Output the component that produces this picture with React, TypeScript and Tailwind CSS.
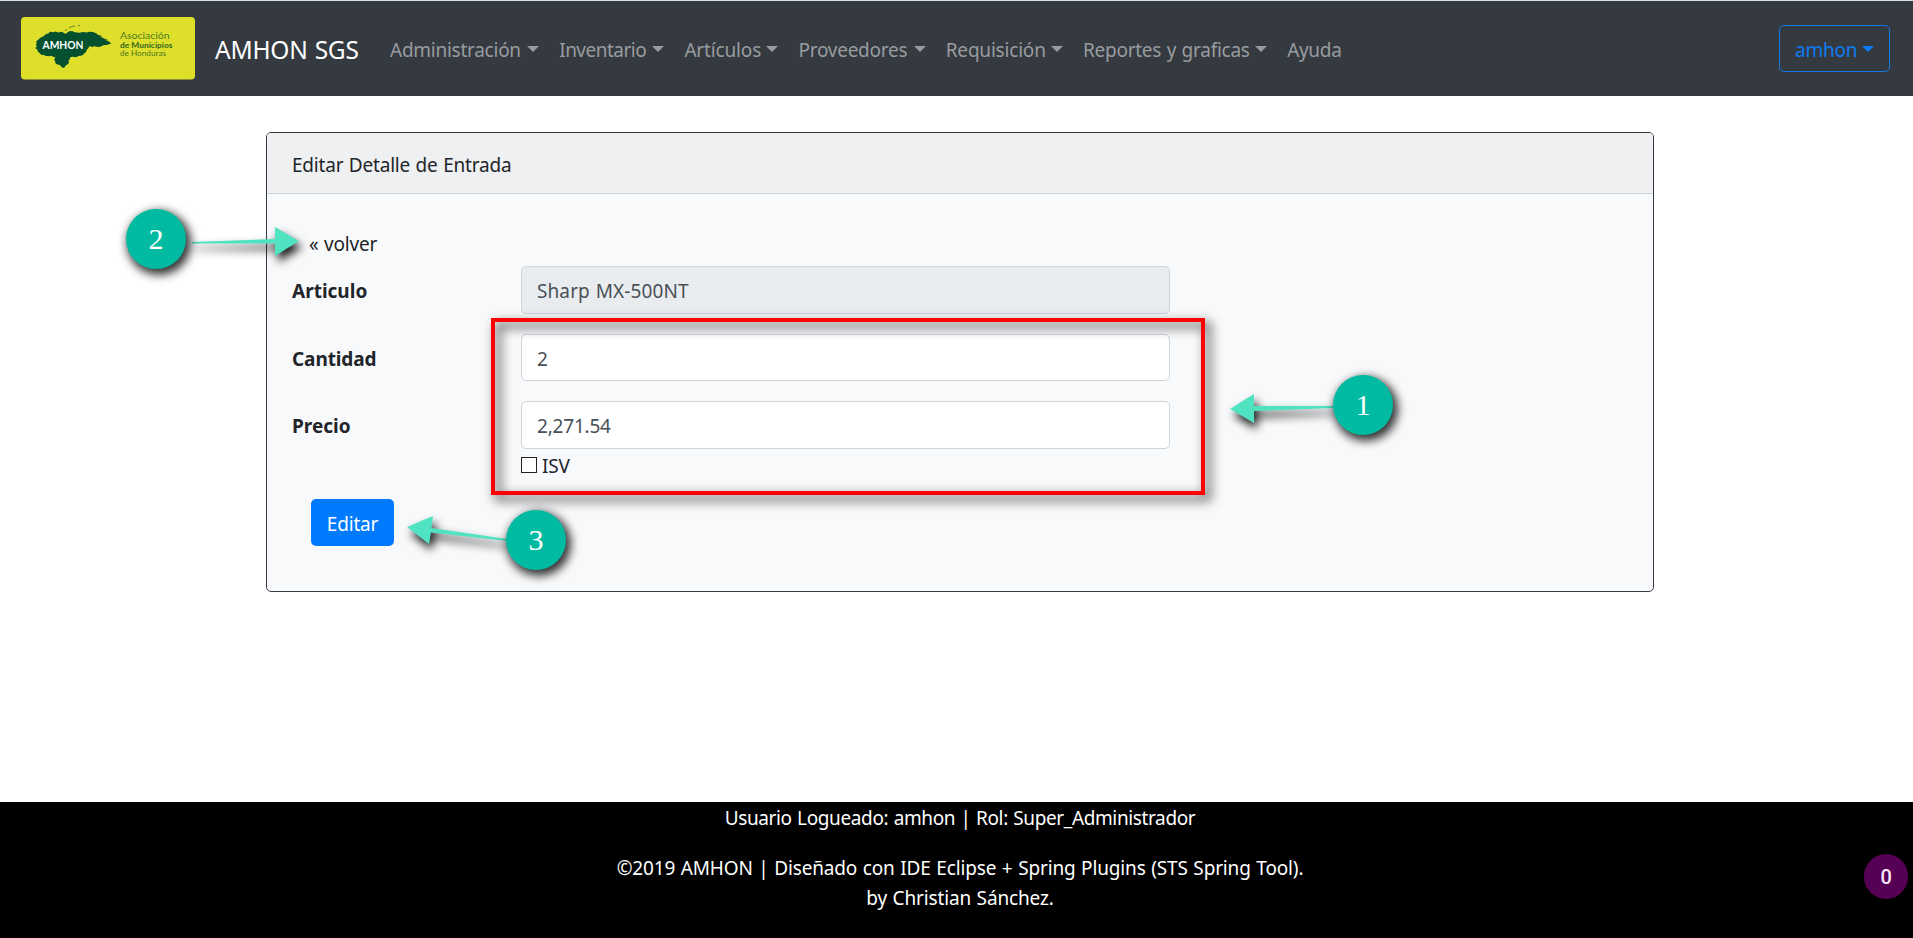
import React from "react";

function Caret({ className = "" }: { className?: string }) {
  return (
    <svg viewBox="0 0 12 6" className={`block h-[6px] w-[12px] shrink-0 ${className}`} fill="currentColor">
      <path d="M0 0h12L6 6z" />
    </svg>
  );
}

const menu = [
  { label: "Administración", width: "w-[131px]", tracking: "tracking-[-0.26px]", caret: true },
  { label: "Inventario", width: "w-[87px]", tracking: "tracking-[-0.5px]", caret: true },
  { label: "Artículos", width: "w-[76px]", tracking: "tracking-[-0.15px]", caret: true },
  { label: "Proveedores", width: "w-[109px]", tracking: "tracking-[-0.27px]", caret: true },
  { label: "Requisición", width: "w-[99px]", tracking: "tracking-[-0.2px]", caret: true },
  { label: "Reportes y graficas", width: "w-[166px]", tracking: "tracking-[-0.25px]", caret: true },
  { label: "Ayuda", width: "w-[54px]", tracking: "tracking-[-0.3px]", caret: false },
];

function Logo() {
  return (
    <svg viewBox="0 0 174 63" className="block h-[63px] w-[174px] shrink-0">
      <rect width="174" height="62.5" rx="4" fill="#dddf2b" />
      <path
        fill="#04502f"
        transform="translate(-0.6 0)"
        d="M14.7 31l1.800-1.500-1-1.500.8-1.700-.6-1.600 2-2 3-2.400 2-.9 3-2.400 2.200-.6 1.800-1.700 3.300.6 2-.8 2.700 1 4-.7 2 1.400 2 .5 2.300-2.200 3.700-.5 2.600 1.300 4.700.4 3.600-.7 4 .4 2.400-.7 3.300.2 3.400 1.400 2.500 2 1.500-.2 3.300 2.900 3.700 1.300.5 1.500 3.800 2.500-3.700 1.400-4.300.6-3 1.400-2.700.3-3.500-.7-2.100.7-2.700-1-1 2.200-1.700 1.500-.6 2.200-1.700 1.400-1.300 1.500-2 .9-2.600.2-2.400 1.400-3.300-.5-2.700.5-.3 2-1.400 1.400.6 1.800-.9 1.500-2.700 1.700-.7 1.500-2 .8-1.500-1.600-1.800-1.700-2.200-.2-1.800-1.500-.3-1.700-1-1.600 1.300-2.400-1.800-.4-2.500-1.200-2.300.6-2.700-.3-2.300-1-2.700-.3-1.600-1.700-1.800-1.700-.4-1.700z"
      />
      <path d="M44 13.500l2-1M48 11l3-1.500 3-.3M57 9l2-.8" stroke="#3c6a2c" strokeWidth=".8" fill="none" />
      <path d="M79 19.500l4 1.500 4 3" stroke="#dddf2b" strokeWidth=".6" fill="none" />
      <text x="21.500" y="31.800" textLength="41" lengthAdjust="spacingAndGlyphs" fill="#fff" fontSize="11.500" fontWeight="700" fontFamily="Lato, sans-serif" letterSpacing="0">AMHON</text>
      <g fill="#4f7a22" fontFamily="Lato, sans-serif" letterSpacing="0" wordSpacing="0">
        <text x="99" y="22.300" textLength="49.500" lengthAdjust="spacingAndGlyphs" fontSize="9.500">Asociación</text>
        <text x="99" y="30.700" textLength="52.500" lengthAdjust="spacingAndGlyphs" fontSize="8.300" fontWeight="700" fill="#30661f">de Municipios</text>
        <text x="99" y="39.200" textLength="46" lengthAdjust="spacingAndGlyphs" fontSize="8.300">de Honduras</text>
      </g>
    </svg>
  );
}

function Step({ n, className }: { n: number; className: string }) {
  return (
    <div
      className={`absolute flex h-[60px] w-[60px] items-center justify-center rounded-full bg-[#00bba2] font-['Liberation_Serif',serif] text-[30px] leading-none text-white shadow-[3px_4px_10px_2px_rgba(0,0,0,0.8)] ${className}`}
    >
      {n}
    </div>
  );
}

function Arrow({ points, className }: { points: string; className: string }) {
  return (
    <svg viewBox="0 0 110 30" className={`absolute h-[30px] w-[110px] overflow-visible drop-shadow-[3px_6px_5px_rgba(0,0,0,0.9)] ${className}`}>
      <polygon points={points} fill="#4fe3c1" />
    </svg>
  );
}

const field = "flex w-[649px] items-center rounded-[5px] border border-[#ced4da] pt-[2px] pl-[15px] text-[#495057]";

export default function App() {
  return (
    <div className="relative flex h-[938px] w-[1913px] flex-col overflow-hidden bg-white font-['Noto_Sans',sans-serif] text-[19px] leading-[30px] tracking-[-0.2px] [word-spacing:0.8px] text-[#212529]">
      <nav className="flex h-[96px] shrink-0 items-center border-t border-[#d8e3e3] bg-[#343a40] pr-[23px] pl-[21px]">
        <Logo />
        <a className="mt-[2px] ml-[20px] w-[144px] text-[24.5px] tracking-[-0.25px] [word-spacing:1px] whitespace-nowrap text-white">AMHON SGS</a>
        <ul className="ml-[31px] flex gap-[20.2px] text-[#999c9f]">
          {menu.map((m) => (
            <li key={m.label} className="flex items-center gap-[6px]">
              <span className={`mt-[2px] whitespace-nowrap ${m.width} ${m.tracking}`}>{m.label}</span>
              {m.caret && <Caret />}
            </li>
          ))}
        </ul>
        <button className="ml-auto flex h-[47px] w-[111px] items-center gap-[6px] rounded-[5px] border border-[#1678e0] pl-[15px] text-[#0d7bf5]">
          <span className="mt-[2px] w-[61px] text-left">amhon</span>
          <Caret />
        </button>
      </nav>

      <main className="flex-1 pt-[36px] pl-[266px]">
        <section className="h-[460px] w-[1388px] rounded-[5px] border border-[#343a40] bg-[#f8f9fb]">
          <header className="flex h-[61px] items-center rounded-t-[4px] border-b border-[#d0d3d6] bg-[#eff0f2] pl-[25px]">
            <span className="mt-[3px]">Editar Detalle de Entrada</span>
          </header>
          <div className="pt-[35px] pl-[25px]">
            <a className="ml-[17px] block h-[37px]">« volver</a>
            <div className="flex h-[68px]">
              <label className="w-[229px] pt-[10px] font-bold tracking-[0px]">Articulo</label>
              <div className={`h-[48px] bg-[#e9ecef] tracking-[0.1px] ${field}`}>Sharp MX-500NT</div>
            </div>
            <div className="flex h-[67px]">
              <label className="w-[229px] pt-[10px] font-bold tracking-[-0.1px]">Cantidad</label>
              <div className={`h-[47px] bg-white ${field}`}>2</div>
            </div>
            <div className="flex h-[98px]">
              <label className="w-[229px] pt-[10px] font-bold tracking-[0px]">Precio</label>
              <div>
                <div className={`h-[48px] bg-white ${field}`}>2,271.54</div>
                <label className="flex items-center gap-[5px]">
                  <span className="mt-[-1px] h-[16px] w-[16px] border border-[#222] bg-white" />
                  <span className="mt-[2px]">ISV</span>
                </label>
              </div>
            </div>
            <button className="ml-[19px] flex h-[47px] w-[83px] items-center justify-center rounded-[5px] bg-[#007bff] pt-[2px] text-white">Editar</button>
          </div>
        </section>
      </main>

      <footer className="h-[136px] shrink-0 bg-black pt-px text-center text-white">
        <p className="pl-[7px] tracking-[-0.37px]">Usuario Logueado: amhon | Rol: Super_Administrador</p>
        <p className="mt-[20px] pl-[7px] tracking-[-0.15px]">
          ©2019 AMHON | Diseñado con IDE Eclipse + Spring Plugins (STS Spring Tool).
          <br />
          by Christian Sánchez.
        </p>
      </footer>

      <div className="absolute top-[318px] left-[491px] h-[177px] w-[714px] border-4 border-[#ff0000] drop-shadow-[5px_5px_6px_rgba(0,0,0,0.9)]" />
      <Arrow className="top-[394px] left-[1230px]" points="0,15 24,0 24,12 104,12 104,14 24,17 24,29" />
      <Step n={1} className="top-[375px] left-[1333px]" />
      <Arrow className="top-[227px] left-[192px]" points="107,14 83,0 83,12 0,15 0,16.500 83,16.500 83,29" />
      <Step n={2} className="top-[209px] left-[126px]" />
      <Arrow className="top-[515px] left-[407px]" points="0,12 26,1 24.500,13 100,24 100,26 24,17.500 22,29" />
      <Step n={3} className="top-[510px] left-[506px]" />
      <div className="absolute top-[854px] left-[1864px] flex h-[45px] w-[44px] items-center justify-center rounded-full bg-[#550055] font-['Roboto',sans-serif] text-[20px] font-medium text-[#fbe6fb]">0</div>
    </div>
  );
}
